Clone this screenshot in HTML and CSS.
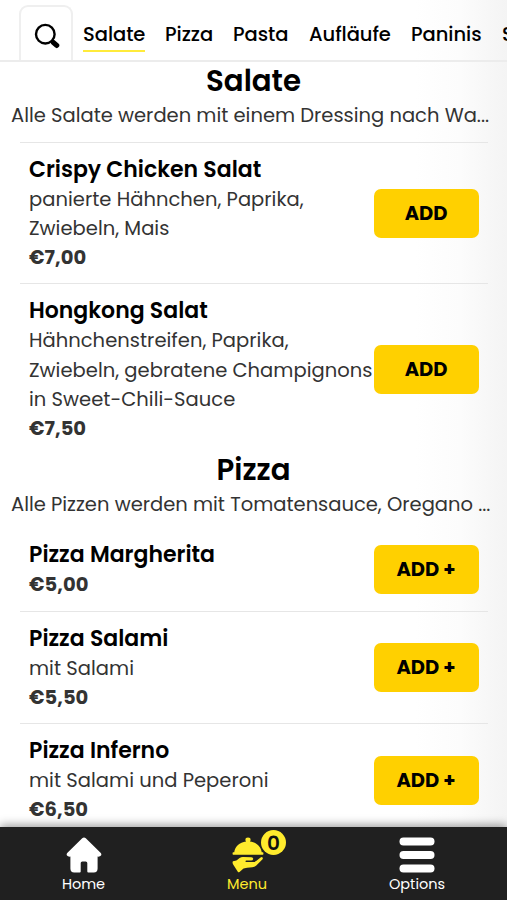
FILE: index.html
```html
<!DOCTYPE html>
<html lang="de">
<head>
<meta charset="utf-8">
<title>Speisekarte</title>
<link rel="stylesheet" href="styles.css">
</head>
<body>
<div class="app">
  <header class="tabs">
    <button class="search" aria-label="Suche">
      <svg width="27" height="27" viewBox="0 0 27 27"><circle cx="11.300" cy="11.200" r="9.300" fill="none" stroke="#000" stroke-width="2.400"/><path d="M17.800 17.800l1.800 1.800" stroke="#000" stroke-width="2.500"/><path d="M19.500 19.600l3.200 2.800" stroke="#000" stroke-width="5.200" stroke-linecap="round"/></svg>
    </button>
    <nav class="categories">
      <a class="category category-active c-salate">Salate</a>
      <a class="category c-pizza">Pizza</a>
      <a class="category c-pasta">Pasta</a>
      <a class="category c-auflauf">Aufläufe</a>
      <a class="category c-panini">Paninis</a>
      <a class="category">Snacks</a>
    </nav>
  </header>
  <main class="menu">
    <section>
      <h2 class="h-salate">Salate</h2>
      <p class="note note-salate">Alle Salate werden mit einem Dressing nach Wa...</p>
      <article class="item ruled">
        <div class="info"><h3>Crispy Chicken Salat</h3><p>panierte Hähnchen, Paprika,<br>Zwiebeln, Mais</p><strong>€7,00</strong></div>
        <button class="add">ADD</button>
      </article>
      <article class="item ruled">
        <div class="info"><h3>Hongkong Salat</h3><p>Hähnchenstreifen, Paprika,<br>Zwiebeln, gebratene Champignons<br>in Sweet-Chili-Sauce</p><strong>€7,50</strong></div>
        <button class="add">ADD</button>
      </article>
    </section>
    <section>
      <h2 class="h-pizza">Pizza</h2>
      <p class="note note-pizza">Alle Pizzen werden mit Tomatensauce, Oregano ...</p>
      <article class="item first">
        <div class="info"><h3>Pizza Margherita</h3><strong>€5,00</strong></div>
        <button class="add">ADD +</button>
      </article>
      <article class="item ruled">
        <div class="info"><h3>Pizza Salami</h3><p>mit Salami</p><strong>€5,50</strong></div>
        <button class="add">ADD +</button>
      </article>
      <article class="item ruled">
        <div class="info"><h3>Pizza Inferno</h3><p>mit Salami und Peperoni</p><strong>€6,50</strong></div>
        <button class="add">ADD +</button>
      </article>
    </section>
  </main>
  <footer class="bar">
    <a class="link home">
      <svg width="36" height="36" viewBox="0 0 36 36"><path d="M16.2 1.2q1.8-1.4 3.6 0L34.8 16q1 1.6.2 2.6-.8 1.2-3.4 1V31.500q0 4-3.800 4H22.300q-1 0-1-1V26q0-1.600-1.600-1.600h-3.400q-1.600 0-1.600 1.600v8.500q0 1-1 1H8.200q-3.800 0-3.800-4V19.600q-2.600.2-3.400-1-.8-1 .2-2.600z" fill="#fff"/></svg>
      <span>Home</span>
    </a>
    <a class="link current">
      <svg width="32" height="36" viewBox="0 0 32 36"><g fill="#ffeb2d"><path d="M13.400 3q0-2.400 2.600-2.400T18.600 3q0 .9-.7 1.500C24.500 5.300 29 9.500 29.800 15.500H2.200C3 9.500 7.500 5.300 14.100 4.500q-.7-.6-.7-1.500zM1.200 15.300h29.600q.6 0 .6.700v1.100q0 .6-.6.600H1.200q-.6 0-.6-.6V16q0-.7.6-.7z"/><path d="M1 24.300l3.400-.9 3.200-2.500q1.700-1 4-.8l7.800.1q2 .2 1.800 1.800-.3 1.500-2.100 1.500h-4.800q-.8.200-.8.900.1.700.9.700h6.700q1.800 0 3-1l4.500-3.600q1.400-.8 2 .1.600 1-.3 1.900l-6 6q-1.600 1.600-4 1.800-6 .3-8.800 1.100l-4 3.500q-1 .8-1.700-.2L1 27.200q-.9-2 0-2.900z"/></g></svg>
      <b class="badge">0</b>
      <span>Menu</span>
    </a>
    <a class="link options">
      <svg width="36" height="36" viewBox="0 0 36 36" fill="#fff"><rect x=".5" y=".5" width="35" height="8" rx="4"/><rect x=".5" y="14" width="35" height="8" rx="4"/><rect x=".5" y="27.500" width="35" height="8" rx="4"/></svg>
      <span>Options</span>
    </a>
  </footer>
</div>
</body>
</html>
```
FILE: styles.css
```css
* { box-sizing: border-box; margin: 0; }
body { font-family: "Poppins", Inter, "Liberation Sans", sans-serif; color: #333; }
.app { height: 900px; overflow: hidden; display: flex; flex-direction: column; background: linear-gradient(90deg, #fff 415px, #fcfcfc 460px, #f4f4f4 100%); }
button { font-family: inherit; border: 0; }
.tabs { height: 62px; flex: none; display: flex; align-items: flex-end; padding-left: 19px; border-bottom: 2px solid #ececec; }
.search { width: 54px; height: 55px; flex: none; background: #fff; border: 2px solid #efefef; border-bottom: 0; border-radius: 9px 9px 0 0; padding: 12px 0 0 3px; }
.categories { display: flex; height: 60px; padding: 20px 0 0 10px; white-space: nowrap; }
.category { flex: none; height: 32px; margin-right: 20px; font-size: 19.5px; line-height: 30px; font-weight: 500; color: #000; letter-spacing: -.05px; }
.category-active { border-bottom: 2px solid #ffeb3b; }
.c-salate { width: 62px; }
.c-pizza { width: 48px; }
.c-pasta { width: 56px; }
.c-auflauf { width: 82px; }
.c-panini { width: 71px; }
.menu { flex: 1; min-height: 0; overflow: hidden; }
h2 { font-size: 29.25px; line-height: 38px; font-weight: 600; color: #000; text-align: center; }
.h-salate { margin-bottom: 0; }
.h-pizza { margin-top: -3px; }
.note { margin-left: 11px; font-size: 19.5px; line-height: 29px; white-space: nowrap; padding-top: 1px; }
.item { display: flex; align-items: center; justify-content: space-between; margin: 0 19px 0 20px; padding: 12px 9px 11px; }
.ruled { border-top: 1.500px solid #e6e6e6; }
.note-salate { margin-bottom: 11.600px; }
.note-pizza { margin-bottom: 9px; }
.info { font-size: 19.5px; line-height: 29.250px; width: 344px; white-space: nowrap; letter-spacing: .03px; }
h3 { font-size: 22px; line-height: 30px; font-weight: 600; color: #000; letter-spacing: 0; }
.info strong { display: block; font-weight: 700; }
.add { width: 105px; height: 49px; flex: none; border-radius: 7px; background: #ffd000; color: #000; font-size: 19.500px; font-weight: 700; padding: 0 1px 0 0; }
.bar { height: 73px; flex: none; background: #202020; display: grid; grid-template-columns: 167px 160px 180px; color: #fff; box-shadow: 0 -2px 9px rgba(0,0,0,.4); position: relative; }
.link { display: flex; flex-direction: column; align-items: center; padding-top: 10px; font-size: 14.500px; line-height: 20px; position: relative; }
.link svg { display: block; margin-bottom: 1px; }
.current { color: #ffeb2d; }
.current svg { margin-right: -2px; }
.badge { position: absolute; left: 94px; top: 3px; width: 25px; height: 25px; border-radius: 50%; background: #ffeb2d; color: #111; font-size: 20px; line-height: 26px; font-weight: 600; text-align: center; }
```
